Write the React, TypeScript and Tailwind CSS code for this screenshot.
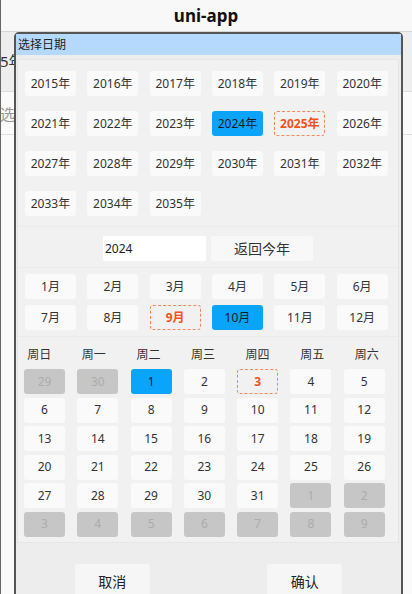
import React from 'react'

const FONT = { fontFamily: '"Noto Sans", "Noto Sans CJK SC", sans-serif' }

const YEARS = Array.from({ length: 21 }, (_, i) => 2015 + i)
const MONTHS = Array.from({ length: 12 }, (_, i) => i + 1)
const WEEK = ['周日', '周一', '周二', '周三', '周四', '周五', '周六']

// October 2024 grid: starts on Tuesday, 6 rows
const DAYS = [
  ...[29, 30].map((d) => ({ d, out: true })),
  ...Array.from({ length: 31 }, (_, i) => ({ d: i + 1, out: false })),
  ...Array.from({ length: 9 }, (_, i) => ({ d: i + 1, out: true })),
]

function cellClass(selected: boolean, today: boolean) {
  if (selected) return 'bg-[#0aa4fa] text-[#1a1a1a]'
  if (today) return 'border border-dashed border-[#f08a5d] text-[#f0531c] font-bold'
  return 'bg-[#fafafa] text-[#333]'
}

export default function App() {
  return (
    <div className="relative w-[412px] h-[594px] overflow-hidden bg-[#fafafa]" style={FONT}>
      {/* page behind the dialog */}
      <div className="h-[32px] bg-[#f8f8f8] border-b border-[#d6d6d6] flex items-center justify-center">
        <span className="text-[17px] font-bold text-[#111]">uni-app</span>
      </div>
      <div className="h-[60px] bg-[#eeeeee] border-b border-[#dcdcdc] flex items-center">
        <div className="w-[14px] overflow-hidden whitespace-nowrap text-[15px] text-[#333]">5年</div>
      </div>
      <div className="h-[43px] bg-[#fafafa] border-b border-[#dedede] flex items-center">
        <div className="w-[14px] overflow-hidden whitespace-nowrap text-[15px] text-[#999] pt-[3px]">选</div>
      </div>
      <div className="absolute left-0 top-0 bottom-0 w-px bg-[#666]" />

      {/* dialog */}
      <div className="absolute left-[14px] top-[32px] w-[389px] h-[600px] border-2 border-[#555] rounded-t-[5px] bg-[#ededed]">
        <div className="h-[21px] bg-[#b5d9fd] flex items-center px-[2px] text-[12px] text-[#222]">选择日期</div>

        <div className="mt-[4px] ml-px mr-[2px] border border-[#e6e6e6] bg-[#f1f1f1]">
          {/* years */}
          <div className="pt-[11px] pb-[10px] pl-[7px]">
            <div className="w-[374px] grid grid-cols-6 gap-y-[15px]">
              {YEARS.map((y) => (
                <div
                  key={y}
                  className={`w-[51px] h-[25px] rounded-[3px] flex items-center justify-center text-[12px] ${cellClass(y === 2024, y === 2025)}`}
                >
                  {y}年
                </div>
              ))}
            </div>
          </div>

          {/* year input */}
          <div className="border-t border-[#ebebeb] pt-[9px] pb-[6px] flex justify-center gap-[5px]">
            <div className="w-[103px] h-[25px] bg-white flex items-center px-[2px] text-[12px] text-[#222]">2024</div>
            <div className="w-[102px] h-[25px] rounded-[3px] bg-[#f8f8f8] flex items-center justify-center text-[14px] text-[#333]">
              返回今年
            </div>
          </div>

          {/* months */}
          <div className="border-t border-[#ebebeb] pt-[6px] pb-[6px] pl-[7px]">
            <div className="w-[374px] grid grid-cols-6 gap-y-[6px]">
              {MONTHS.map((m) => (
                <div
                  key={m}
                  className={`w-[51px] h-[25px] rounded-[3px] flex items-center justify-center text-[12px] ${cellClass(m === 10, m === 9)}`}
                >
                  {m}月
                </div>
              ))}
            </div>
          </div>

          {/* days */}
          <div className="border-t border-[#ebebeb] pb-[5px]">
            <div className="-ml-[6px] w-[382px] h-[29px] mt-[3px] grid grid-cols-7 items-center text-center text-[12px] text-[#333]">
              {WEEK.map((w) => (
                <span key={w}>{w}</span>
              ))}
            </div>
            <div className="w-[373px] grid grid-cols-7 gap-y-[3.6px]">
              {DAYS.map((c, i) => {
                const cls = c.out
                  ? 'bg-[#c6c6c6] text-[#acacac]'
                  : cellClass(c.d === 1, c.d === 3)
                return (
                  <div
                    key={i}
                    className={`ml-[6px] w-[41px] h-[25px] rounded-[3px] flex items-center justify-center text-[12px] ${cls}`}
                  >
                    {c.d}
                  </div>
                )
              })}
            </div>
          </div>
        </div>

        {/* footer */}
        <div className="mt-[21px] flex justify-around">
          <button className="w-[75px] h-[36px] rounded-[3px] bg-[#f6f6f6] text-[14px] text-[#222]">取消</button>
          <button className="w-[75px] h-[36px] rounded-[3px] bg-[#f6f6f6] text-[14px] text-[#222]">确认</button>
        </div>
      </div>
    </div>
  )
}
